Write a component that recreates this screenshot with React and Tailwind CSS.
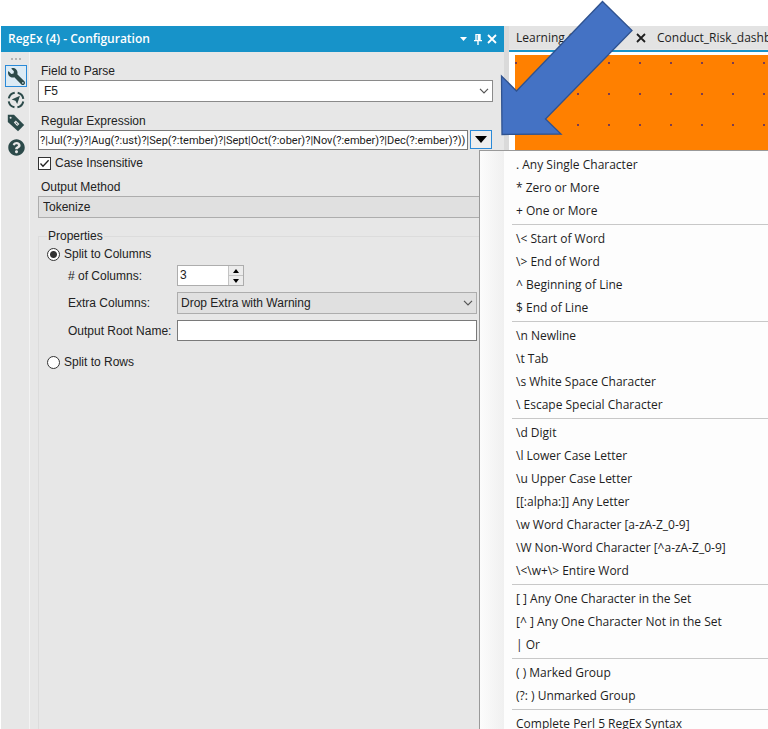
import React, { useState } from "react";
import { FaQuestionCircle, FaWrench } from "react-icons/fa";

const TOKEN_GROUPS = [
  [". Any Single Character", "* Zero or More", "+ One or More"],
  ["\\< Start of Word", "\\> End of Word", "^ Beginning of Line", "$ End of Line"],
  [
    "\\n Newline",
    "\\t Tab",
    "\\s White Space Character",
    "\\ Escape Special Character",
  ],
  [
    "\\d Digit",
    "\\l Lower Case Letter",
    "\\u Upper Case Letter",
    "[[:alpha:]] Any Letter",
    "\\w Word Character [a-zA-Z_0-9]",
    "\\W Non-Word Character [^a-zA-Z_0-9]",
    "\\<\\w+\\> Entire Word",
  ],
  [
    "[ ] Any One Character in the Set",
    "[^ ] Any One Character Not in the Set",
    "| Or",
  ],
  ["( ) Marked Group", "(?: ) Unmarked Group"],
  ["Complete Perl 5 RegEx Syntax"],
];

const PATTERN =
  "?|Jul(?:y)?|Aug(?:ust)?|Sep(?:tember)?|Sept|Oct(?:ober)?|Nov(?:ember)?|Dec(?:ember)?))";

function CloseIcon({ className }) {
  return (
    <svg viewBox="0 0 10 10" className={className} fill="none" stroke="currentColor">
      <path d="M1 1 9 9M9 1 1 9" strokeWidth="1.8" />
    </svg>
  );
}

function PinIcon() {
  return (
    <svg viewBox="0 0 8 11" className="h-[11px] w-2" fill="currentColor">
      <path d="M1.3 0h5.4v6H8v1.3H4.7V11H3.3V7.3H0V6h1.3zM2.7 1.1V6h.9V1.1z" fillRule="evenodd" />
    </svg>
  );
}

function TargetIcon() {
  return (
    <svg viewBox="0 0 18 18" className="h-[18px] w-[18px]">
      <circle
        cx="9"
        cy="9"
        r="7.4"
        fill="none"
        stroke="#2c4a4a"
        strokeWidth="2"
        strokeDasharray="8.6 3.02"
        strokeDashoffset="-1.5"
      />
      <path d="M13 4.8 10.2 13 8.4 9.8 4.6 8.6z" fill="#2c4a4a" />
    </svg>
  );
}

function TagIcon() {
  return (
    <svg viewBox="0 0 18 18" className="h-[18px] w-[18px]">
      <path d="M.8.8H7L17.2 11 11 17.2.8 8z" fill="#2c4a4a" />
      <path d="M8.8 6.6 12.4 10 10.2 12 6.8 8.6z" fill="#e7e7e7" />
      <circle cx="3.6" cy="3.7" r="1" fill="#e7e7e7" />
      <path d="M8.8 8.6 10.5 10.2" stroke="#2c4a4a" strokeWidth="1" />
    </svg>
  );
}

function ComboBox({ id, options, className }) {
  return (
    <div className="relative">
      <select
        id={id}
        className={`block h-[22px] w-full appearance-none border pr-5 pb-px outline-none ${className}`}
      >
        {options.map((o) => (
          <option key={o}>{o}</option>
        ))}
      </select>
      <svg
        viewBox="0 0 10 6"
        className="pointer-events-none absolute top-2 right-1 h-1.5 w-2.5"
        fill="none"
        stroke="#555"
      >
        <path d="M1 .8 5 4.8 9 .8" strokeWidth="1.2" />
      </svg>
    </div>
  );
}

function TokenMenu() {
  return (
    <div
      role="menu"
      className="absolute top-[20px] left-[9px] z-20 w-[400px] border border-[#999] bg-[linear-gradient(90deg,#fcfcfc_0,#f0f0f0_24px,#fdfdfd_24px)] py-1 font-['Open_Sans','Noto_Sans',sans-serif] text-[12px] text-[#1e1e1e]"
    >
      {TOKEN_GROUPS.map((group, g) => (
        <div key={g} role="group">
          {g > 0 && <div className="mb-1 ml-8 h-px bg-[#c8c8c8]" />}
          {group.map((item) => (
            <button
              key={item}
              type="button"
              role="menuitem"
              className="block h-[23px] w-full pb-[5px] pl-9 text-left leading-[15px] whitespace-pre hover:bg-sky-100"
            >
              {item}
            </button>
          ))}
        </div>
      ))}
    </div>
  );
}

function Toolbar() {
  return (
    <div className="flex w-[29px] flex-col items-center gap-[3px] border-r border-[#f3f3f3] pt-1.5 pl-0.5 text-[#2c4a4a]">
      <div className="flex gap-0.5 pb-0.5">
        <span className="h-0.5 w-0.5 bg-[#b4b4b4]" />
        <span className="h-0.5 w-0.5 bg-[#b4b4b4]" />
        <span className="h-0.5 w-0.5 bg-[#b4b4b4]" />
      </div>
      <button
        type="button"
        aria-label="Configuration"
        className="flex h-[22px] w-[22px] items-center justify-center border border-[#2a8ad8] bg-[#dcebf5]"
      >
        <FaWrench className="h-[17px] w-[17px] -scale-x-100" />
      </button>
      <button type="button" aria-label="Navigation" className="flex h-5 items-center">
        <TargetIcon />
      </button>
      <button type="button" aria-label="Annotation" className="flex h-5 items-center">
        <TagIcon />
      </button>
      <button type="button" aria-label="Help" className="flex h-5 items-center pt-0.5">
        <FaQuestionCircle className="h-[17px] w-[17px]" />
      </button>
    </div>
  );
}

function SpinButton({ label, path }) {
  return (
    <button
      type="button"
      aria-label={label}
      className="flex flex-1 items-center justify-center bg-[#ececec]"
    >
      <svg viewBox="0 0 6 4" className="h-1 w-1.5">
        <path d={path} fill="currentColor" />
      </svg>
    </button>
  );
}

function RadioRow({ label, defaultChecked }) {
  return (
    <label className="flex items-center gap-1 leading-[18px]">
      <input
        type="radio"
        name="split"
        defaultChecked={defaultChecked}
        className="h-[13px] w-[13px] appearance-none rounded-full border border-[#333] bg-white checked:bg-[radial-gradient(circle,#333_0_3px,#fff_4px)]"
      />
      {label}
    </label>
  );
}

function ConfigForm() {
  const [menuOpen, setMenuOpen] = useState(true);

  return (
    <form
      className="flex min-w-0 flex-1 flex-col pt-2.5 pr-[11px] pl-2"
      onSubmit={(e) => e.preventDefault()}
    >
      <label htmlFor="field" className="pl-[3px] leading-[18px]">
        Field to Parse
      </label>
      <ComboBox
        id="field"
        options={["F5"]}
        className="border-[#8a8a8a] bg-white pl-[5px]"
      />

      <label htmlFor="regex" className="mt-2.5 pl-[3px] leading-[18px]">
        Regular Expression
      </label>
      <div className="flex gap-0.5">
        <input
          id="regex"
          type="text"
          defaultValue={PATTERN}
          className="h-5 min-w-0 flex-1 border border-[#7a7a7a] bg-white pl-px font-[Roboto,'Liberation_Sans',sans-serif] text-[11px] outline-none"
        />
        <div className="relative pr-px">
          <button
            type="button"
            aria-label="Insert token"
            aria-expanded={menuOpen}
            onClick={() => setMenuOpen(!menuOpen)}
            className="flex h-[19px] w-[22px] items-center justify-center border border-[#2a8ad8] bg-[#eee]"
          >
            <svg viewBox="0 0 12 7" className="h-[7px] w-3">
              <path d="M0 0h12L6 7z" fill="#000" />
            </svg>
          </button>
          {menuOpen && <TokenMenu />}
        </div>
      </div>

      <label className="mt-1 flex items-center gap-1 leading-[18px]">
        <input
          type="checkbox"
          defaultChecked
          className="peer h-[13px] w-[13px] appearance-none border border-[#333] bg-white"
        />
        <svg
          viewBox="0 0 13 13"
          className="pointer-events-none invisible -ml-[17px] h-[13px] w-[13px] peer-checked:visible"
          fill="none"
          stroke="#222"
        >
          <path d="M2.5 6.5 5 9.3 10.6 3.2" strokeWidth="1.3" />
        </svg>
        Case Insensitive
      </label>

      <label htmlFor="method" className="mt-1.5 pl-[3px] leading-[18px]">
        Output Method
      </label>
      <ComboBox
        id="method"
        options={["Tokenize"]}
        className="border-[#adadad] bg-[#e0e0e0] pl-1"
      />

      <fieldset className="mt-[9px] flex-1 border border-b-0 border-[#dcdcdc] pr-[15px] pl-2">
        <legend className="px-px leading-[18px]">Properties</legend>
        <RadioRow label="Split to Columns" defaultChecked />
        <div className="grid grid-cols-[109px_1fr] items-center gap-y-1.5 pt-0.5 pb-3 pl-[21px]">
          <label htmlFor="count">
            # of Columns:
          </label>
          <div className="flex h-[21px] w-[67px] border border-[#adadad] bg-white">
            <input
              id="count"
              type="text"
              inputMode="numeric"
              defaultValue="3"
              className="min-w-0 flex-1 pb-0.5 pl-0.5 outline-none"
            />
            <div className="flex w-[15px] flex-col gap-px bg-[#c4c4c4] pl-px text-black">
              <SpinButton label="Increase" path="M0 4h6L3 0z" />
              <SpinButton label="Decrease" path="M0 0h6L3 4z" />
            </div>
          </div>
          <label htmlFor="extra">
            Extra Columns:
          </label>
          <ComboBox
            id="extra"
            options={["Drop Extra with Warning"]}
            className="border-[#adadad] bg-[#e0e0e0] pl-[3px]"
          />
          <label htmlFor="root-name">
            Output Root Name:
          </label>
          <input
            id="root-name"
            type="text"
            className="h-[21px] w-full border border-[#7a7a7a] bg-white px-1 outline-none"
          />
        </div>
        <RadioRow label="Split to Rows" />
      </fieldset>
    </form>
  );
}

function Canvas() {
  return (
    <main className="relative flex min-w-0 flex-col">
      <div className="flex h-6 items-center overflow-hidden border-b border-[#e8e8e8] bg-[#e3e3e3] pl-[7px] font-['Open_Sans','Noto_Sans',sans-serif] text-[12px] whitespace-nowrap text-[#1e1e1e]">
        <button type="button" className="w-[120px] shrink-0 text-left">
          Learning Course
        </button>
        <button type="button" aria-label="Close tab" className="shrink-0">
          <CloseIcon className="h-[10px] w-[10px]" />
        </button>
        <button type="button" className="pl-[11px]">
          Conduct_Risk_dashbo
        </button>
      </div>
      <div className="flex flex-1 border-t-2 border-[#1793c9] bg-white pt-[3px] pl-1.5">
        <div className="flex-1 bg-[#ff8000] bg-[radial-gradient(circle_at_1px_8px,#7b3c50_0_0.8px,transparent_1px)] bg-size-[31px_31px]" />
      </div>
      <svg
        viewBox="0 0 134 138"
        className="pointer-events-none absolute -top-[26px] -left-[9px] z-30 h-[138px] w-[134px]"
      >
        <path
          d="M102.5 1.5 132 30.5 45.5 119 61 134 2 134.5 1.5 76 16.5 91z"
          fill="#4472c4"
          stroke="#2f528f"
          strokeWidth="1.3"
        />
      </svg>
    </main>
  );
}

export default function App() {
  return (
    <div className="h-screen overflow-hidden bg-white pt-[26px] pl-px font-['Liberation_Sans',Arial,sans-serif] text-[12px] text-[#222]">
      <div className="grid h-full grid-cols-[503fr_5px_259fr]">
        <section className="flex min-w-0 flex-col bg-[#e7e7e7]">
          <header className="flex h-[26px] items-center gap-[5px] bg-[#1793c9] px-[7px] text-white">
            <h1 className="flex-1 font-['Open_Sans','Noto_Sans',sans-serif] text-[12px] font-semibold">
              RegEx (4) - Configuration
            </h1>
            <button type="button" aria-label="Window menu" className="pr-0.5">
              <svg viewBox="0 0 7 4" className="h-1 w-[7px]">
                <path d="M0 0h7L3.5 4z" fill="currentColor" />
              </svg>
            </button>
            <button type="button" aria-label="Pin">
              <PinIcon />
            </button>
            <button type="button" aria-label="Close">
              <CloseIcon className="h-[10px] w-[10px]" />
            </button>
          </header>
          <div className="flex min-h-0 flex-1">
            <Toolbar />
            <ConfigForm />
          </div>
        </section>
        <div className="bg-[#dadada]" />
        <Canvas />
      </div>
    </div>
  );
}
